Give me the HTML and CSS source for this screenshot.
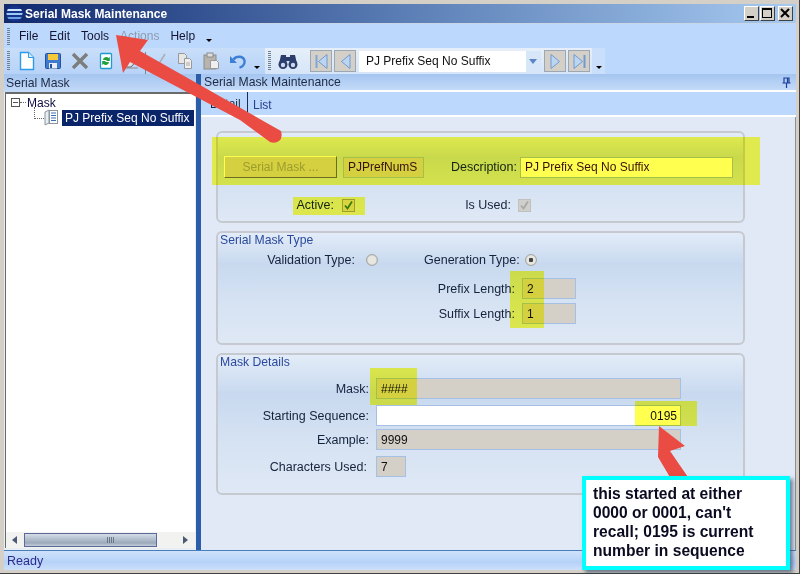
FILE: index.html
```html
<!DOCTYPE html>
<html lang="en">
<head>
<meta charset="utf-8">
<title>Serial Mask Maintenance</title>
<link rel="stylesheet" href="styles.css">
</head>
<body>
<div class="window">
  <header class="titlebar">
    <svg class="app-icon" width="17" height="17" viewBox="0 0 17 17"><defs><clipPath id="disc"><ellipse cx="8.5" cy="8.5" rx="8" ry="8"/></clipPath></defs><g clip-path="url(#disc)"><rect width="17" height="17" fill="#16348c"/><rect y="4" width="17" height="2" fill="#cfe6ff"/><rect y="8" width="17" height="2" fill="#9ccbf7"/><rect y="12" width="17" height="2" fill="#6aa4e6"/></g></svg>
    <span class="title-text">Serial Mask Maintenance</span>
    <div class="win-buttons">
      <span class="win-btn"><svg width="13" height="13" viewBox="0 0 13 13"><rect x="2" y="9" width="7" height="2" fill="#000"/></svg></span>
      <span class="win-btn"><svg width="13" height="13" viewBox="0 0 13 13"><rect x="1.5" y="1.5" width="9" height="9" fill="none" stroke="#000"/><rect x="1" y="1" width="10" height="2" fill="#000"/></svg></span>
      <span class="win-btn win-btn-close"><svg width="13" height="13" viewBox="0 0 13 13"><path d="M2 2l8 8M10 2l-8 8" stroke="#000" stroke-width="2"/></svg></span>
    </div>
  </header>

  <nav class="menubar">
    <span class="grip"></span>
    <span class="menu-item">File</span>
    <span class="menu-item">Edit</span>
    <span class="menu-item">Tools</span>
    <span class="menu-item menu-disabled">Actions</span>
    <span class="menu-item">Help</span>
    <span class="drop-arrow menu-arrow"></span>
  </nav>

  <div class="toolbar">
    <div class="tool-strip">
      <span class="grip grip-tool"></span>
      <span class="tool"><svg width="18" height="20" viewBox="0 0 18 20"><path d="M2.500 1.500h8l5 5v12h-13z" fill="#fff" stroke="#2f9be8" stroke-width="1.400"/><path d="M10.500 1.500v5h5" fill="#d8eeff" stroke="#2f9be8"/></svg></span>
      <span class="tool"><svg width="18" height="18" viewBox="0 0 18 18"><rect x="1.500" y="1.500" width="15" height="15" rx="1" fill="#3f79d0" stroke="#25509c"/><rect x="4" y="2" width="10" height="6" fill="#f5c93a"/><rect x="5" y="11" width="8" height="5.500" fill="#e9eef5"/><rect x="6" y="12" width="2" height="4" fill="#25509c"/></svg></span>
      <span class="tool"><svg width="18" height="18" viewBox="0 0 18 18"><path d="M2 2l14 14M16 2L2 16" stroke="#7d7d7d" stroke-width="3.400"/></svg></span>
      <span class="tool"><svg width="18" height="18" viewBox="0 0 18 18"><rect x="3.500" y="1.500" width="11" height="15" rx="1" fill="#fff" stroke="#1f9ad0" stroke-width="1.300"/><path d="M6 8a3.200 3.200 0 0 1 5.500-2l1.300-1v4h-4l1.200-1M12 10a3.200 3.200 0 0 1-5.500 2l-1.300 1V9h4l-1.200 1" fill="#23a03a"/></svg></span>
      <span class="tool"><svg width="18" height="18" viewBox="0 0 18 18"><path d="M2 12l9-9 5 3-8 9H4z" fill="#dfe3e8" stroke="#666"/><path d="M1 16h14" stroke="#8a8a8a"/></svg></span>
      <span class="tool-sep"></span>
      <span class="tool"><svg width="18" height="18" viewBox="0 0 18 18"><path d="M3 9l4 6L15 2" fill="none" stroke="#aab0b8" stroke-width="1.600"/></svg></span>
      <span class="tool"><svg width="18" height="18" viewBox="0 0 18 18"><path d="M2.500 1.500h6l2 2v8h-8z" fill="#e6e6e6" stroke="#999"/><path d="M8.500 6.500h5l2 2v8h-7z" fill="#efefef" stroke="#999"/><path d="M10 11h4M10 13h4" stroke="#aaa"/></svg></span>
      <span class="tool"><svg width="18" height="18" viewBox="0 0 18 18"><rect x="2" y="3" width="12" height="14" fill="#b8b4ac" stroke="#8c8c8c"/><rect x="5" y="1" width="6" height="4" fill="#ddd" stroke="#8c8c8c"/><path d="M8.500 8.500h6l2 2v6h-8z" fill="#efefef" stroke="#999"/></svg></span>
      <span class="tool"><svg width="18" height="18" viewBox="0 0 18 18"><path d="M4.500 7.500C7 4 14 3.500 15.500 8.500C16.300 12 13.500 15 10.500 15.500" fill="none" stroke="#3b7fd6" stroke-width="2.400"/><path d="M1 4l7 7H1z" fill="#3b7fd6"/></svg></span>
      <span class="drop-arrow tool-arrow"></span>
    </div>
    <div class="nav-strip">
      <span class="grip grip-tool"></span>
      <span class="tool tool-binoc"><svg width="20" height="18" viewBox="0 0 20 18"><circle cx="5" cy="12.500" r="4.500" fill="#2b3c6e"/><circle cx="15" cy="12.500" r="4.500" fill="#2b3c6e"/><path d="M3 3h5v9H1zM12 3h5l2 9h-7zM8 5h4v4H8z" fill="#2b3c6e"/><circle cx="5" cy="13" r="2.200" fill="#cfd8ea"/><circle cx="15" cy="13" r="2.200" fill="#cfd8ea"/></svg></span>
      <span class="nav-btn"><svg width="19" height="19" viewBox="0 0 19 19"><path d="M4.500 3v13" stroke="#7fa6d8" stroke-width="2"/><path d="M15 2.500v14L6.500 9.500z" fill="#bcd6f2" stroke="#6f9ad2"/></svg></span>
      <span class="nav-btn"><svg width="19" height="19" viewBox="0 0 19 19"><path d="M14 2.500v14L5.500 9.500z" fill="#bcd6f2" stroke="#6f9ad2"/></svg></span>
      <div class="combo">
        <span class="combo-text">PJ Prefix Seq No Suffix</span>
        <span class="combo-btn"></span>
      </div>
      <span class="nav-btn"><svg width="19" height="19" viewBox="0 0 19 19"><path d="M5 2.500v14l8.500-7z" fill="#bcd6f2" stroke="#6f9ad2"/></svg></span>
      <span class="nav-btn"><svg width="19" height="19" viewBox="0 0 19 19"><path d="M4 2.500v14l8.500-7z" fill="#bcd6f2" stroke="#6f9ad2"/><path d="M14.500 3v13" stroke="#6f9ad2" stroke-width="2"/></svg></span>
      <span class="drop-strip"><span class="drop-arrow"></span></span>
    </div>
  </div>

  <div class="workspace">
    <aside class="left-pane">
      <div class="pane-head">Serial Mask</div>
      <div class="tree">
        <div class="tree-body">
          <div class="tree-root">
            <span class="expander"></span>
            <span class="tree-dots"></span>
            <span>Mask</span>
          </div>
          <div class="tree-child">
            <span class="tree-elbow"></span>
            <svg class="tree-icon" width="15" height="17" viewBox="0 0 15 17"><path d="M1 3l4-2v13l-4 2z" fill="#e8edf2" stroke="#8b949e"/><rect x="5.500" y="1.500" width="8" height="13" fill="#fff" stroke="#8b949e"/><path d="M7 4h5M7 6.500h5M7 9h5M7 11.500h5" stroke="#3a6fb5"/></svg>
            <span class="tree-label">PJ Prefix Seq No Suffix</span>
          </div>
        </div>
        <div class="hscroll">
          <span class="sc-arrow sc-left"></span>
          <span class="sc-thumb"><span class="sc-grip"></span></span>
          <span class="sc-arrow sc-right"></span>
        </div>
      </div>
    </aside>

    <main class="right-pane">
      <div class="pane-head pane-head-right">
        <span>Serial Mask Maintenance</span>
        <svg class="pin" width="9" height="11" viewBox="0 0 9 11"><path d="M2 1h5v5H2zM0.500 6h8M4.500 6v5M5.500 1v5" fill="none" stroke="#1d3f9c" stroke-width="1.200"/></svg>
      </div>
      <div class="tabs">
        <span class="tab tab-active">Detail</span>
        <span class="tab tab-plain">List</span>
      </div>
      <div class="content">
        <section class="group group-head">
          <div class="row-main">
            <span class="btn">Serial Mask ...</span>
            <span class="field code-field">PJPrefNumS</span>
            <label class="lbl lbl-desc">Description:</label>
            <span class="field white desc-field">PJ Prefix Seq No Suffix</span>
          </div>
          <div class="row-flags">
            <label class="lbl lbl-active">Active:</label>
            <span class="check"><svg width="11" height="11" viewBox="0 0 11 11"><path d="M2 5.500l2.500 3L9 1.500" fill="none" stroke="#3d7a2a" stroke-width="1.800"/></svg></span>
            <label class="lbl lbl-used">Is Used:</label>
            <span class="check check-off"><svg width="11" height="11" viewBox="0 0 11 11"><path d="M2 5.500l2.500 3L9 1.500" fill="none" stroke="#a8a8a8" stroke-width="1.800"/></svg></span>
          </div>
        </section>

        <section class="group group-type">
          <h2 class="group-title">Serial Mask Type</h2>
          <div class="row-radios">
            <label class="lbl lbl-valid">Validation Type:</label>
            <span class="radio"></span>
            <label class="lbl lbl-gen">Generation Type:</label>
            <span class="radio radio-on"></span>
          </div>
          <div class="row-len">
            <label class="lbl lbl-len">Prefix Length:</label>
            <span class="field len-field">2</span>
          </div>
          <div class="row-len">
            <label class="lbl lbl-len">Suffix Length:</label>
            <span class="field len-field">1</span>
          </div>
        </section>

        <section class="group group-details">
          <h2 class="group-title">Mask Details</h2>
          <div class="row-mask row-mask-first">
            <label class="lbl lbl-mask">Mask:</label>
            <span class="field mask-field">####</span>
          </div>
          <div class="row-mask">
            <label class="lbl lbl-mask">Starting Sequence:</label>
            <span class="field white mask-field seq-field">0195</span>
          </div>
          <div class="row-mask row-mask-tight">
            <label class="lbl lbl-mask">Example:</label>
            <span class="field mask-field">9999</span>
          </div>
          <div class="row-mask">
            <label class="lbl lbl-mask lbl-chars">Characters Used:</label>
            <span class="field chars-field">7</span>
          </div>
        </section>
      </div>
    </main>
  </div>

  <footer class="statusbar">Ready</footer>

  <span class="hl hl-1"></span>
  <span class="hl hl-2"></span>
  <span class="hl hl-3"></span>
  <span class="hl hl-4"></span>
  <span class="hl hl-5"></span>

  <svg class="arrows" width="800" height="574" viewBox="0 0 800 574">
    <path d="M116 35L148 40L140 51L281 131Q283 138 279 141Q275 144 270 142L240 120L130 62L123 73Z" fill="#ea4b43"/>
    <path d="M659 426L685 446L670 451L690 480L674 484L658 457Z" fill="#ea4b43"/>
  </svg>

  <div class="callout">this started at either<br>0000 or 0001, can't<br>recall; 0195 is current<br>number in sequence</div>
</div>
</body>
</html>
```

FILE: styles.css
```css
* { box-sizing: border-box; }
html, body { margin: 0; padding: 0; }
body { font-family: "Liberation Sans", Arial, sans-serif; font-size: 12px; color: #111; }

.window {
  position: relative;
  width: 800px;
  height: 574px;
  overflow: hidden;
  background: #d4d0c8;
  padding: 4px;
  display: flex;
  flex-direction: column;
  box-shadow: inset -1px -1px 0 #404040;
}

.titlebar {
  height: 19px;
  flex: none;
  display: flex;
  align-items: center;
  padding-left: 2px;
  background: linear-gradient(90deg, #10296f 0%, #5a7db5 50%, #a6caf0 100%);
}
.app-icon { flex: none; }
.title-text { margin-left: 2px; color: #fff; font-weight: bold; font-size: 12px; }
.win-buttons { margin-left: auto; display: flex; gap: 1px; margin-right: 3px; }
.win-btn {
  width: 15px; height: 15px; display: flex; align-items: center; justify-content: center;
  background: #d4d0c8;
  border: 1px solid; border-color: #fff #404040 #404040 #fff;
}
.win-btn-close { margin-left: 2px; }

.menubar {
  height: 25px;
  flex: none;
  display: flex;
  align-items: center;
  background: #bcd9fd;
  border-top: 1px solid #c8d6e8;
  padding-left: 3px;
}
.grip {
  width: 3px; height: 17px; flex: none;
  background: repeating-linear-gradient(#6f7f95 0 1px, transparent 1px 2px);
}
.menu-item { margin-right: 11px; font-size: 12px; color: #141432; }
.menu-item:nth-child(2) { margin-left: 9px; }
.menu-disabled { color: #8d9aae; }
.drop-arrow { width: 0; height: 0; border: 3px solid transparent; border-top: 3px solid #000; border-bottom: 0; flex: none; display: block; }
.menu-arrow { margin: 9px 0 0 0; }

.toolbar {
  height: 26px;
  flex: none;
  display: flex;
  background: #bcd9fd;
}
.tool-strip {
  width: 261px;
  display: flex;
  align-items: center;
  padding-left: 3px;
  background: linear-gradient(#c9def9, #b7d3f8);
}
.grip-tool { height: 20px; margin-right: 4px; }
.tool { width: 26.300px; height: 22px; display: flex; align-items: center; justify-content: center; flex: none; }
.tool-sep { width: 1px; height: 22px; background: #7b8695; margin: 0 -1px 0 0; flex: none; align-self: flex-end; }
.tool-arrow { margin: 12px 0 0 3px; }
.nav-strip {
  width: 340px;
  display: flex;
  align-items: center;
  padding-left: 3px;
  background: linear-gradient(#e6eff9, #d6e5f8);
}
.nav-strip .grip-tool { margin-right: 5px; }
.tool-binoc { width: 24px; margin-right: 10px; }
.nav-btn {
  width: 22px; height: 22px; flex: none; margin-right: 2px;
  display: flex; align-items: center; justify-content: center;
  background: #d4d0c8;
  border: 1px solid #9ba7b5;
}
.combo {
  width: 182px; height: 21px; margin: 0 3px 0 1px; flex: none;
  display: flex; align-items: center; background: #fff;
}
.combo-text { flex: 1; padding-left: 7px; font-size: 12px; }
.combo-btn {
  width: 15px; height: 21px;
  background: #d7e6f8;
}
.combo-btn::after {
  content: ""; display: block; width: 0; height: 0; margin: 8px 0 0 3px;
  border: 4px solid transparent; border-top: 5px solid #5b86c5; border-bottom: 0;
}
.drop-strip {
  width: 13px; height: 26px; display: flex; align-items: flex-end; justify-content: center; padding-bottom: 5px;
  background: #cadffb;
}

.workspace { flex: 1; display: flex; min-height: 0; }
.left-pane { width: 192px; flex: none; display: flex; flex-direction: column; background: #e9eef5; }
.pane-head {
  height: 18px; flex: none;
  display: flex; align-items: center; padding-left: 2px;
  font-size: 12.200px; color: #1e2a44;
  background: linear-gradient(#a4c5f0, #c4daf8);
}
.tree {
  flex: 1; display: flex; flex-direction: column; min-height: 0;
  margin: 0 1px 2px 1px;
  background: #fff;
  border-top: 2px solid #6a6a6a;
  border-left: 1px solid #6a6a6a;
}
.tree-body { flex: 1; padding: 2px 0 0 5px; }
.tree-root { height: 13px; display: flex; align-items: center; font-size: 12px; color: #0b0b40; }
.expander {
  width: 9px; height: 9px; flex: none; border: 1px solid #555;
  background: linear-gradient(#555, #555) center / 5px 1px no-repeat, #fff;
}
.tree-dots { width: 6px; height: 1px; margin-right: 1px; border-top: 1px dotted #666; }
.tree-child { display: flex; align-items: center; height: 17px; padding-left: 28px; }
.tree-elbow { width: 10px; height: 12px; margin: -10px 0 0 -5px; border-left: 1px dotted #666; border-bottom: 1px dotted #666; flex: none; }
.tree-icon { flex: none; margin-right: 3px; }
.tree-label { background: #0a246a; color: #fff; height: 16px; line-height: 16px; padding: 0 3px; font-size: 12px; white-space: nowrap; width: 132px; }
.hscroll { height: 16px; flex: none; display: flex; align-items: center; background: #f2f2f0; }
.sc-arrow { width: 0; height: 0; flex: none; border: 4px solid transparent; }
.sc-left { border-right: 5px solid #4a5a70; border-left: 0; margin-left: 6px; }
.sc-right { border-left: 5px solid #4a5a70; border-right: 0; margin-left: 26px; }
.sc-thumb {
  width: 133px; height: 14px; margin-left: 7px;
  display: flex; align-items: center; justify-content: center; padding-left: 40px;
  border: 1px solid #5b6a9a;
  background: linear-gradient(#d5dde8, #9aa9ba 75%, #c4ced9);
}
.sc-grip { width: 7px; height: 6px; background: repeating-linear-gradient(90deg, #6a7688 0 1px, transparent 1px 2px); }

.right-pane {
  flex: 1; display: flex; flex-direction: column; min-width: 0;
  border-left: 5px solid;
  border-image: linear-gradient(90deg, #2c5da8 0 1px, #6f9bd8 1px 4px, #1c3a78 4px) 1;
}
.pane-head-right { height: 16px; padding-left: 3px; justify-content: space-between; }
.pin { margin-right: 5px; }
.tabs {
  height: 27px; flex: none; display: flex; align-items: flex-end;
  background: #bcd9fd;
  border-top: 2px solid #fff;
  border-bottom: 2px solid #fff;
  font-size: 12px;
}
.tab-plain { color: #27408f; padding-bottom: 3px; }
.tab-active {
  width: 47px; height: 23px; color: #1e2a44; padding: 5px 0 0 9px;
  border-right: 1px solid #1c2c55;
  margin-right: 5px;
}
.content {
  flex: 1; min-height: 0; display: flex; flex-direction: column; gap: 8px;
  background: #e0e9f5;
  padding: 14px 50px 0 15px;
  border-right: 1px solid #8a8f96;
}
.group {
  flex: none;
  border: 2px solid #c6cad0;
  border-radius: 6px;
  background: linear-gradient(#e3ecf8 0, #c8d9ef 28%, #d6e3f3 65%, #dfe8f5 100%);
}
.group-head { height: 92px; padding: 23px 0 0 6px; }
.group-type { height: 114px; }
.group-details { height: 142px; }
.group-title { margin: 0; padding: 0 0 0 2px; font-size: 12.200px; line-height: 14px; font-weight: normal; color: #2b4a9e; }
.lbl { font-size: 12.500px; color: #14223c; text-align: right; flex: none; white-space: nowrap; }
.field {
  display: flex; align-items: center; height: 21px; flex: none;
  font-size: 12px; padding-left: 4px;
  background: #d4d0c8;
  border: 1px solid #a5c0e4;
}
.white { background: #fff; }
.btn {
  width: 113px; height: 22px; flex: none; display: flex; align-items: center; justify-content: center;
  color: #9d9d8c; font-size: 12px;
  background: #d4d0c8;
  border: 1px solid; border-color: #fff #6e6c66 #6e6c66 #fff;
}
.row-main { display: flex; align-items: center; }
.code-field { width: 81px; margin-left: 6px; color: #3a1020; }
.lbl-desc { width: 70px; margin: 0 3px 0 23px; }
.desc-field { width: 213px; color: #3a1020; }
.row-flags { display: flex; align-items: center; margin-top: 20px; }
.lbl-active { width: 67px; margin: 0 8px 0 43px; }
.lbl-used { width: 46px; margin-left: 110px; margin-right: 7px; }
.check {
  width: 13px; height: 13px; flex: none; display: flex; align-items: center; justify-content: center;
  background: #d8d5cc; border: 1px solid #a09d94;
}
.check-off { background: #cfcfcb; border-color: #c0c0bc; }
.row-radios { display: flex; align-items: center; margin-top: 6px; height: 14px; }
.lbl-valid { width: 88px; margin-left: 49px; }
.lbl-gen { width: 93px; margin-left: 46px; }
.radio {
  width: 12px; height: 12px; border-radius: 50%; flex: none; margin-left: 11px;
  background: radial-gradient(circle, #e8e6e0 55%, #9a9a94 100%);
  border: 1px solid #a8a8a4;
}
.radio-on { margin-left: 8px; background: radial-gradient(circle, #444 0 2px, #e8e6e0 2.500px 60%, #9a9a94 100%); }
.row-len { display: flex; align-items: center; margin-top: 4px; }
.row-radios + .row-len { margin-top: 11px; }
.lbl-len { width: 297px; margin-right: 7px; }
.len-field { width: 54px; }
.row-mask { display: flex; align-items: center; margin-top: 6px; }
.row-mask-first { margin-top: 9px; }
.row-mask-tight { margin-top: 3px; }
.lbl-mask { width: 151px; margin-right: 7px; }
.lbl-chars { width: 149px; margin-right: 9px; }
.mask-field { width: 305px; }
.seq-field { justify-content: flex-end; padding: 0 3px 0 0; }
.chars-field { width: 30px; }

.statusbar {
  height: 20px; flex: none; display: flex; align-items: center; padding-left: 3px;
  font-size: 12.500px; color: #2c2a8c;
  border-top: 1px solid #4a7ebb;
  background: linear-gradient(#cfe2fc, #b6d2f8 60%, #cde0fb);
}

/* Annotation layer drawn on top of the screenshot */
.hl { position: absolute; background: #ffff50; mix-blend-mode: multiply; }
.hl-1 { left: 212px; top: 137px; width: 548px; height: 48px; }
.hl-2 { left: 293px; top: 197px; width: 72px; height: 18px; }
.hl-3 { left: 510px; top: 271px; width: 34px; height: 57px; }
.hl-4 { left: 370px; top: 368px; width: 47px; height: 37px; }
.hl-5 { left: 635px; top: 401px; width: 62px; height: 25px; }
.arrows { position: absolute; left: 0; top: 0; pointer-events: none; }
.callout {
  position: absolute; left: 582px; top: 476px; width: 208px; height: 94px;
  background: #fff; border: 4px solid #00ffff;
  box-shadow: 3px 3px 4px rgba(40, 60, 90, .6);
  padding: 4px 0 0 7px;
  font-size: 15.600px; font-weight: bold; line-height: 19px; color: #0a0a20;
  white-space: nowrap;
}
```
